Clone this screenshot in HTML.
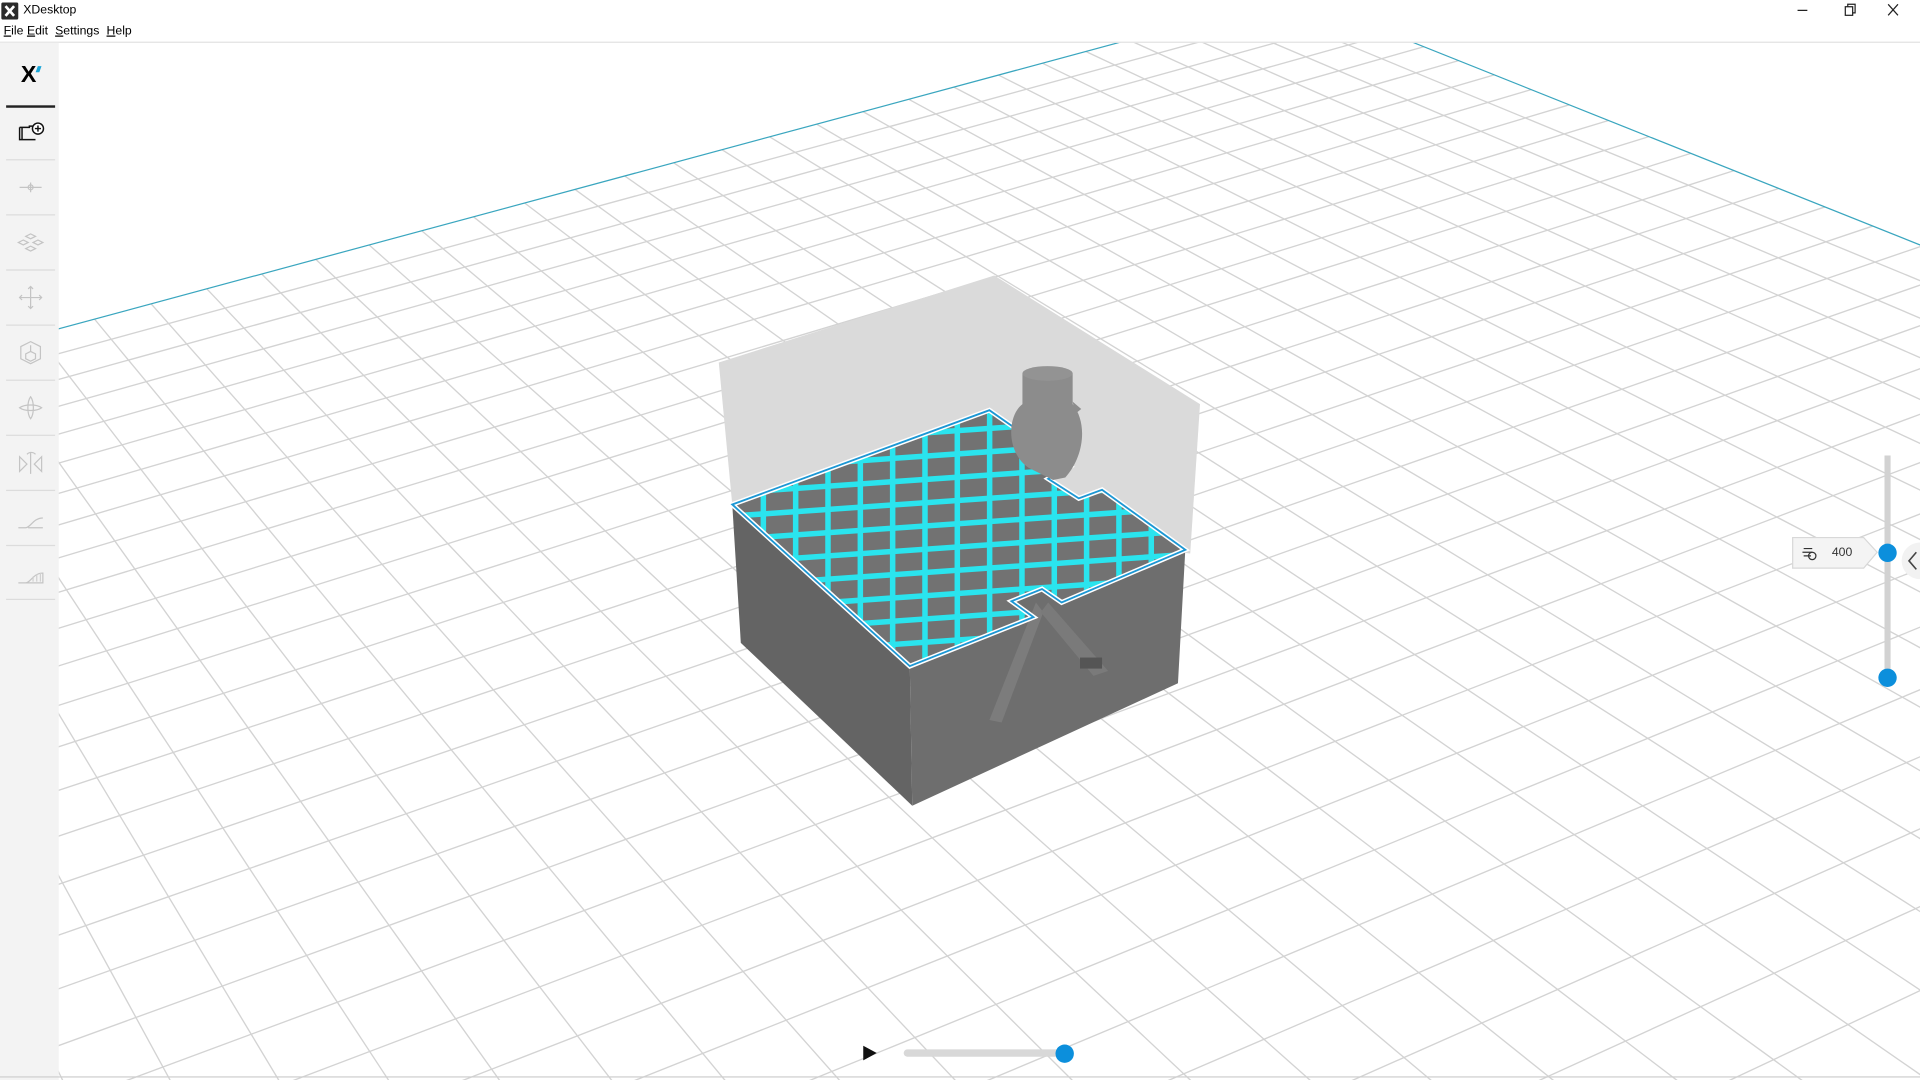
<!DOCTYPE html>
<html><head><meta charset="utf-8"><style>
html,body{margin:0;padding:0;width:1920px;height:1080px;overflow:hidden;background:#fff}
#w{position:absolute;left:0;top:0;width:1568px;height:882px;overflow:hidden;transform:scale(1.22449);transform-origin:0 0;font-family:"Liberation Sans",sans-serif;color:#000}
.t{position:absolute;font-size:10px;white-space:nowrap}
#side{position:absolute;left:0;top:35px;width:48px;height:847px;background:#f3f3f3}
.sep{position:absolute;left:5px;width:40px;height:1px;background:#dcdcdc}
.ic{position:absolute;left:13px;width:24px;height:24px}
</style></head><body><div id="w">
<svg id="g" width="1568" height="882" style="position:absolute;left:0;top:0;overflow:hidden"></svg>
<div style="position:absolute;left:0;top:0;width:1568px;height:34px;background:#fff;border-bottom:1px solid #e2e2e2"></div>
<svg style="position:absolute;left:1px;top:2px" width="14" height="14"><rect width="14" height="14" rx="1.5" fill="#2b2b2b"/><path d="M3.5 3l7 8M10.5 3l-7 8" stroke="#fff" stroke-width="2.2"/></svg>
<div class="t" style="left:19px;top:3px">XDesktop</div>
<div class="t" style="left:3px;top:20px"><u>F</u>ile</div>
<div class="t" style="left:22px;top:20px"><u>E</u>dit</div>
<div class="t" style="left:45px;top:20px"><u>S</u>ettings</div>
<div class="t" style="left:87px;top:20px"><u>H</u>elp</div>
<svg style="position:absolute;left:1462px;top:0" width="100" height="18"><path d="M6 8.5h8" stroke="#222"/><rect x="45" y="5.5" width="6" height="7" fill="none" stroke="#222"/><path d="M47 5.5v-2h6v7h-2" fill="none" stroke="#222"/><path d="M80 3.5l8 9M88 3.5l-8 9" stroke="#222"/></svg>
<div id="side"></div>
<div style="position:absolute;left:5px;top:86px;width:40px;height:1.5px;background:#222"></div>
<div class="sep" style="top:130px"></div><div class="sep" style="top:175px"></div><div class="sep" style="top:220px"></div><div class="sep" style="top:265px"></div><div class="sep" style="top:310px"></div><div class="sep" style="top:355px"></div><div class="sep" style="top:400px"></div><div class="sep" style="top:445px"></div><div class="sep" style="top:489px"></div>
<div class="t" style="left:17px;top:51px;font-size:19px;font-weight:bold">X</div>
<div style="position:absolute;left:30px;top:54px;width:3px;height:5px;background:#1aa6d8;transform:skewX(-20deg)"></div>
<svg class="ic" style="top:96px" viewBox="0 0 24 24"><path d="M3 8h8v-1h4M3 8v10h13M3 8h2v10" fill="none" stroke="#111" stroke-width="1.2"/><circle cx="18" cy="9" r="4.5" fill="#fff" stroke="#111" stroke-width="1.2"/><path d="M18 6.5v5M15.5 9h5" stroke="#111" stroke-width="1.2"/></svg>
<svg class="ic" style="top:141px" viewBox="0 0 24 24" fill="none" stroke="#c4c4c4"><path d="M3 12h18M12 8v8"/><circle cx="12" cy="12" r="2"/></svg>
<svg class="ic" style="top:186px" viewBox="0 0 24 24" fill="none" stroke="#c4c4c4"><path d="M12 5l4 2-4 2-4-2zM6 10l4 2-4 2-4-2zM18 10l4 2-4 2-4-2zM12 15l4 2-4 2-4-2z"/></svg>
<svg class="ic" style="top:231px" viewBox="0 0 24 24" fill="none" stroke="#c4c4c4"><path d="M12 3v18M3 12h18M10 5l2-2 2 2M10 19l2 2 2-2M5 10l-2 2 2 2M19 10l2 2-2 2"/></svg>
<svg class="ic" style="top:276px" viewBox="0 0 24 24" fill="none" stroke="#c4c4c4"><path d="M12 3l8 4v10l-8 4-8-4V7z"/><path d="M8 13l4-2 4 2v4l-4 2-4-2zM12 11V6"/></svg>
<svg class="ic" style="top:321px" viewBox="0 0 24 24" fill="none" stroke="#c4c4c4"><path d="M12 3c3 4 3 14 0 18c-3-4-3-14 0-18zM3 12c4-3 14-3 18 0c-4 3-14 3-18 0z"/></svg>
<svg class="ic" style="top:366px" viewBox="0 0 24 24" fill="none" stroke="#c4c4c4"><path d="M3 7v12l6-6zM21 7v12l-6-6zM12 3v18M9 5c2-2 5-2 7 0"/></svg>
<svg class="ic" style="top:413px" viewBox="0 0 24 24" fill="none" stroke="#c4c4c4"><path d="M2 18h6c4 0 6-8 14-8M10 18h12"/></svg>
<svg class="ic" style="top:458px" viewBox="0 0 24 24" fill="none" stroke="#c4c4c4"><path d="M2 18h6c4 0 6-8 14-8v8H8"/><path d="M14 17v-4M17 17v-6M20 17v-7" stroke="#d0d0d0"/></svg>
<div style="position:absolute;left:1539px;top:372px;width:5px;height:182px;background:#d2d2d2"></div>
<div style="position:absolute;left:1533.5px;top:443.5px;width:15px;height:15px;border-radius:50%;background:#0c8fdc"></div>
<div style="position:absolute;left:1533.5px;top:545.5px;width:15px;height:15px;border-radius:50%;background:#0c8fdc"></div>
<svg style="position:absolute;left:1463px;top:438px" width="72" height="28"><path d="M1 1h58l11 12-11 13H1z" fill="#f4f4f4" stroke="#d8d8d8"/><path d="M10 10h7M9 13h8M10 16h6" stroke="#333" stroke-width="1"/><circle cx="17" cy="16" r="3" fill="none" stroke="#333"/></svg>
<div class="t" style="left:1496px;top:446px;font-size:10px;color:#333">400</div>
<div style="position:absolute;left:1553px;top:443px;width:30px;height:30px;border-radius:50%;background:#f2f2f2"></div>
<svg style="position:absolute;left:1556px;top:449px" width="12" height="18"><path d="M9 2l-6 7 6 7" fill="none" stroke="#444" stroke-width="1.3"/></svg>
<svg style="position:absolute;left:704px;top:853px" width="14" height="14"><path d="M1 1l11 6-11 6z" fill="#111"/></svg>
<div style="position:absolute;left:738px;top:857px;width:132px;height:6px;border-radius:3px;background:#d8d8d8"></div>
<div style="position:absolute;left:861.5px;top:852.5px;width:15px;height:15px;border-radius:50%;background:#0c8fdc"></div>
<div style="position:absolute;left:0;top:879px;width:1568px;height:1px;background:#cfcfcf"></div>
</div>
<script>
(function(){
var svg=document.getElementById('g'),NS='http://www.w3.org/2000/svg';
function el(n,a,p){var e=document.createElementNS(NS,n);for(var k in a)e.setAttribute(k,a[k]);(p||svg).appendChild(e);return e;}
var B=[1057.3,-4],V1=[6300,-1419.5],V2=[-735,-720],l1=0.0063,l2=0.0139;
function P(t,s){var w=1-t-s;return[(B[0]-t*V1[0]-s*V2[0])/w,(B[1]-t*V1[1]-s*V2[1])/w];}
var grid=el('g',{stroke:'#d3d3d3','stroke-width':'1.1'});
for(var k=1;k*l1<0.97;k++){var t=k*l1;var a=P(t,0),b=P(t,1-t-0.02);el('line',{x1:a[0],y1:a[1],x2:b[0],y2:b[1]},grid);}
for(var k=1;k*l2<0.97;k++){var s=k*l2;var a=P(0,s),b=P(1-s-0.02,s);el('line',{x1:a[0],y1:a[1],x2:b[0],y2:b[1]},grid);}
var a=P(0,0),b=P(0.97,0),c=P(0,0.97);
el('line',{x1:a[0],y1:a[1],x2:b[0],y2:b[1],stroke:'#3aa6bf','stroke-width':'1'});
el('line',{x1:a[0],y1:a[1],x2:c[0],y2:c[1],stroke:'#3aa6bf','stroke-width':'1'});
var m=el('g',{});
el('polygon',{points:'587,296 812,225 980,330 972,452 598,412',fill:'#dadada'},m);
el('polygon',{points:'598,412 743,544 745,658 605,525',fill:'#646464'},m);
el('polygon',{points:'743,544 844,504 826,491 851,481 867,492 968,449 962,558 745,658',fill:'#6e6e6e'},m);
el('path',{d:'M846 492 L808 588 L818 590 L852 500 Z',fill:'#7c7c7c'},m);
el('path',{d:'M856 492 L905 548 L893 552 L850 500 Z',fill:'#7a7a7a'},m);
el('rect',{x:882,y:537,width:18,height:9,fill:'#555'},m);
var tp='598,412 808,335 874,381 856,391 881,407 900,400 968,449 867,492 851,481 826,491 844,504 743,544';
var defs=el('defs',{});var cp=el('clipPath',{id:'cp'},defs);el('polygon',{points:tp},cp);
el('polygon',{points:tp,fill:'#727272'},m);
var cg=el('g',{'clip-path':'url(#cp)',stroke:'#2ae4ee','stroke-width':'4.5'},m);
for(var x=597;x<980;x+=26.4)el('line',{x1:x,y1:320,x2:x,y2:560},cg);
for(var y=300;y<600;y+=19)el('line',{x1:590,y1:y+27,x2:980,y2:y},cg);
el('polygon',{points:tp,fill:'none',stroke:'#ffffff','stroke-width':'4'},m);
el('polygon',{points:tp,fill:'none',stroke:'#1c97d4','stroke-width':'1.5'},m);
el('path',{d:'M835 305 L835 330 C822 340 822 370 840 382 L860 392 L870 390 C886 372 888 345 876 330 L876 305 Z',fill:'#8c8c8c'},m);
el('ellipse',{cx:855.5,cy:305,rx:20.5,ry:6,fill:'#939393'},m);
el('path',{d:'M876 328 L883 334 L878 338',fill:'#8c8c8c'},m);
})();
</script>
</body></html>
